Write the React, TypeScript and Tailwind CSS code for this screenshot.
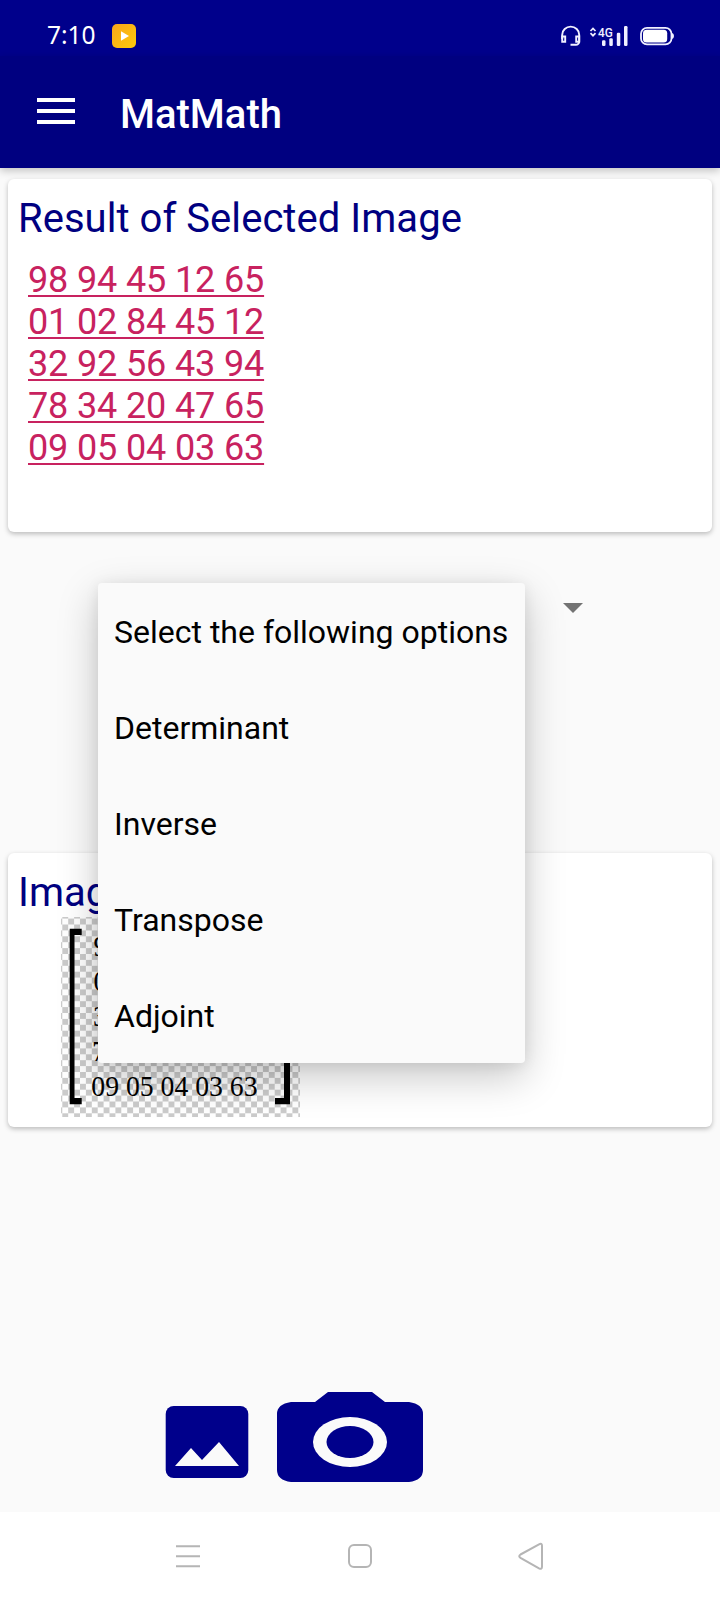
const rows = ['98 94 45 12 65', '01 02 84 45 12', '32 92 56 43 94', '78 34 20 47 65', '09 05 04 03 63'];
const options = ['Select the following options', 'Determinant', 'Inverse', 'Transpose', 'Adjoint'];
const rowInsets = [32.5, 32.5, 32, 31, 30.3];

function StatusBar() {
  return (
    <div className="flex h-14 shrink-0 items-center bg-[#00008b] pl-[46px] pr-[45px] pt-4 text-white">
      <span className="-mt-[2px] w-[66px] pl-px font-['Noto_Sans',sans-serif] text-[24.5px] leading-6">7:10</span>
      <svg className="h-6 w-6" viewBox="0 0 24 24">
        <defs>
          <linearGradient id="tile" x1="0" y1="0" x2="1" y2="1">
            <stop offset="0" stopColor="#f9a51c" />
            <stop offset="1" stopColor="#fdcb0a" />
          </linearGradient>
        </defs>
        <rect width="24" height="24" rx="5" fill="url(#tile)" />
        <path d="M9 7.200v9.600l8-4.800z" fill="#fff" />
      </svg>
      <svg className="ml-auto h-[22px] w-[116px]" viewBox="0 0 116 22" fill="none">
        <g stroke="#f0f0ff" strokeWidth="1.900">
          <path d="M3.200 14V9.700a8.500 8.100 0 0 1 17 0V16.500a3.300 3.300 0 0 1-3.300 3.300H11.500" />
          <path d="M3.200 11.500h3v5.200h-3zM20.200 11.500h-3v5.200h3z" />
        </g>
        <path d="M31.500 6l2.500-2.500L36.500 6M31.500 8.200l2.500 2.500 2.500-2.500" stroke="#f0f0ff" strokeWidth="1.700" />
        <text x="39" y="11.800" fontSize="13" fill="#f0f0ff" className="font-[Roboto,sans-serif] font-medium" textLength="14.800" lengthAdjust="spacingAndGlyphs">4G</text>
        <g fill="#f0f0ff">
          <rect x="43" y="15.200" width="3.500" height="5.800" rx="1.200" />
          <rect x="50.300" y="13.200" width="3.500" height="7.800" rx="1.200" />
          <rect x="57.800" y="7.700" width="3.500" height="13.300" rx="1.200" />
          <rect x="65" y="1" width="3.500" height="20" rx="1.200" />
        </g>
        <rect x="82" y="2.800" width="30.500" height="16.600" rx="6" stroke="#f0f0ff" strokeWidth="1.800" />
        <rect x="84" y="4.800" width="24.200" height="12.600" rx="3.500" fill="#fff" />
        <path d="M113 8q2 .5 2 3t-2 3z" fill="#f0f0ff" />
      </svg>
    </div>
  );
}

function AppBar() {
  return (
    <header className="flex h-28 shrink-0 items-center bg-[#000080] pl-[37px] text-white shadow-[0_3px_8px_rgba(0,0,0,0.22)]">
      <svg className="-mt-[2px] h-[26px] w-[38px]" viewBox="0 0 38 26">
        <path d="M0 0h38v4H0zM0 11h38v4H0zM0 22h38v4H0z" fill="#fff" />
      </svg>
      <h1 className="ml-[45px] mt-[6px] text-[40px] font-medium leading-[48px]">MatMath</h1>
    </header>
  );
}

function MatrixPicture() {
  return (
    <svg className="ml-[53px] h-[200px] w-[239px]" viewBox="0 0 239 200">
      <defs>
        <pattern id="checks" x="1.300" y="1.600" width="11.800" height="11.800" patternUnits="userSpaceOnUse">
          <path d="M0 0h11.800v11.800H0z" fill="#fff" />
          <path d="M0 5.900h5.900v5.900H0zM5.900 0h5.900v5.900H5.900z" fill="#cbcbcb" />
        </pattern>
      </defs>
      <rect width="239" height="200" fill="url(#checks)" />
      <path d="M8.700 11.700h12v6.200h-7.200V181h7.200v6.300h-12zM229 11.700h-15v6.200h9V181h-9v6.300h15z" fill="#000" />
      <g className="font-['Liberation_Serif',serif]" fontSize="28">
        {rows.map((r, i) => (
          <text key={r} transform={`translate(${rowInsets[i]} ${38.8 + i * 35}) scale(0.99 1.06)`}>{r}</text>
        ))}
      </g>
    </svg>
  );
}

function OptionsMenu() {
  return (
    <ul className="absolute left-[90px] top-[51px] h-[480px] w-[427px] rounded bg-[#fafafa] shadow-[0_14px_40px_rgba(0,0,0,0.22),0_2px_14px_rgba(0,0,0,0.08)]">
      {options.map((o) => (
        <li key={o} className="h-24 whitespace-nowrap px-4 text-[32px] leading-[98px] text-black">{o}</li>
      ))}
    </ul>
  );
}

export default function App() {
  return (
    <div className="flex h-[1600px] w-[720px] flex-col overflow-hidden bg-[#fafafa] font-[Roboto,sans-serif]">
      <StatusBar />
      <AppBar />
      <main className="flex flex-1 flex-col px-2 pt-[11px]">
        <section className="h-[353px] rounded-[6px] bg-white px-[10px] pt-4 shadow-[0_2px_5px_rgba(0,0,0,0.25)]">
          <h2 className="text-[40px] leading-[48px] tracking-[0.04px] text-[#000080]">Result of Selected Image</h2>
          <div className="ml-[10px] mt-4 text-[36px] leading-[42px] tracking-[-0.14px] text-[#c8225f] underline decoration-2 underline-offset-[3px]">
            {rows.map((r) => <p key={r} className="w-fit">{r}</p>)}
          </div>
        </section>
        <div className="relative z-10 h-[321px]">
          <svg className="ml-[555px] mt-[71px] h-[10px] w-5" viewBox="0 0 20 10">
            <path d="M0 0h20L10 10z" fill="#737373" />
          </svg>
          <OptionsMenu />
        </div>
        <section className="h-[274px] rounded-[6px] bg-white pt-4 shadow-[0_2px_5px_rgba(0,0,0,0.25)]">
          <h2 className="px-[10px] text-[40px] leading-[48px] text-[#000080]">Image</h2>
          <MatrixPicture />
        </section>
        <div className="mt-[265px] flex items-start pl-[157px]">
          <svg className="mt-[14px] h-[72px] w-[84px]" viewBox="0 0 84 72">
            <rect x="0.700" width="82.600" height="72" rx="8" fill="#00008b" />
            <path d="M10 60l16-18 11 12 17-18 20 24z" fill="#fafafa" />
          </svg>
          <svg className="ml-[27px] h-[90px] w-[148px]" viewBox="0 0 148 90">
            <path d="M15 10h24L52 0h44l13 10h24q14 2 14 12v56q0 10-14 12H15Q1 88 1 78V22Q1 12 15 10z" fill="#00008b" />
            <ellipse cx="74" cy="50" rx="37" ry="25" fill="#fafafa" />
            <ellipse cx="74" cy="50" rx="23.500" ry="16" fill="#00008b" />
          </svg>
        </div>
      </main>
      <nav className="flex h-[88px] shrink-0 items-center bg-white pl-[176px]">
        <svg className="h-7 w-[370px]" viewBox="0 0 370 28" fill="none" stroke="#b5b5b5" strokeWidth="2">
          <path d="M0 4.300h24M0 14.300h24M0 24.300h24" />
          <rect x="173" y="3" width="22" height="22" rx="5" />
          <path d="M344.500 12.500L363 2.300q3-1.500 3 1.500v21q0 3-3 1.500l-18.500-10.500q-2.500-1.650 0-3.300z" />
        </svg>
      </nav>
    </div>
  );
}
